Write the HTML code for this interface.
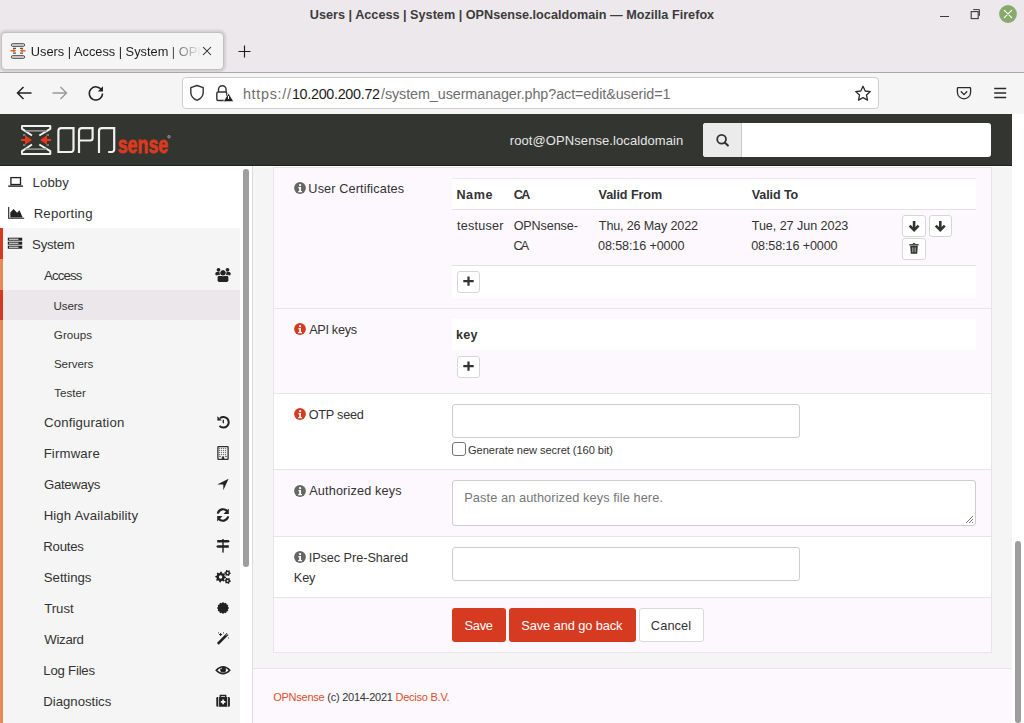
<!DOCTYPE html>
<html><head><meta charset="utf-8">
<style>
*{box-sizing:border-box;margin:0;padding:0}
html,body{width:1024px;height:723px;overflow:hidden;background:#fff}
body{position:relative;font-family:"Liberation Sans",sans-serif;color:#333}
.abs{position:absolute}
.t{position:absolute;white-space:nowrap;line-height:1}
svg{overflow:visible}
</style></head>
<body>
<div class="abs" style="left:0;top:0;width:1024px;height:73px;background:#ece8eb"></div>
<div class="t" style="left:309.84px;top:9px;font-size:12.65px;color:#3c3c3c;font-weight:700;letter-spacing:0.012px;">Users | Access | System | OPNsense.localdomain — Mozilla Firefox</div>
<div class="abs" style="left:940px;top:15.6px;width:8.5px;height:1.3px;background:#3a3a3a"></div>
<svg class="abs" style="left:968px;top:7px" width="14" height="14" viewBox="0 0 14 14"><rect x="3.2" y="4.6" width="7" height="7" fill="none" stroke="#3a3a3a" stroke-width="1.1"/><path d="M5.2 2.6h6.2v6.2" fill="none" stroke="#3a3a3a" stroke-width="1"/></svg>
<svg class="abs" style="left:998px;top:4px" width="20" height="20" viewBox="0 0 20 20"><circle cx="10" cy="10" r="8.9" fill="#89a96b"/><path d="M6.3 6.3L13.7 13.7M13.7 6.3L6.3 13.7" stroke="#fff" stroke-width="1.15" stroke-linecap="round"/></svg>
<div class="abs" style="left:2px;top:33px;width:221px;height:36px;background:#f5f5f5;border-radius:4px;box-shadow:0 0 0 1px rgba(0,0,0,.07),0 0 2px 2.5px rgba(0,0,0,.11)"></div>
<svg class="abs" style="left:8px;top:41px" width="20" height="20" viewBox="0 0 20 20">
<rect x="3.3" y="2.6" width="13.4" height="2.8" rx="1.4" fill="#d0d0d0" stroke="#5a5a5a" stroke-width="1"/>
<rect x="3.3" y="14.6" width="13.4" height="2.8" rx="1.4" fill="#d0d0d0" stroke="#5a5a5a" stroke-width="1"/>
<path d="M5 7.3h3M12 7.3h3M5 12.1h3M12 12.1h3" stroke="#333" stroke-width="1"/>
<path d="M2.5 9.7h3.5M17.5 9.7H14" stroke="#f26522" stroke-width="1.5"/><path d="M5.2 7.6l3 2.1-3 2.1zM14.8 7.6l-3 2.1 3 2.1z" fill="#f26522"/>
</svg>
<div class="t" style="left:30.8px;top:46px;font-size:12.8px;color:#1e1e1e;width:170px;overflow:hidden;-webkit-mask-image:linear-gradient(90deg,#000 135px,transparent 170px)">Users | Access | System | OPNsense.localdomain</div>
<svg class="abs" style="left:202px;top:46px" width="10" height="10" viewBox="0 0 10 10"><path d="M1 1L9 9M9 1L1 9" stroke="#222" stroke-width="1.05"/></svg>
<svg class="abs" style="left:238px;top:45px" width="13" height="13" viewBox="0 0 13 13"><path d="M6.5 0.5v12M0.5 6.5h12" stroke="#1e1e1e" stroke-width="1.15"/></svg>
<div class="abs" style="left:0;top:72px;width:1024px;height:1px;background:#aaa7aa"></div>
<div class="abs" style="left:0;top:73px;width:1024px;height:41px;background:#f5f5f5"></div>
<svg class="abs" style="left:15px;top:85px" width="18" height="16" viewBox="0 0 18 16"><path d="M16.5 8H2.5M8.5 2L2.5 8l6 6" fill="none" stroke="#222" stroke-width="1.5"/></svg>
<svg class="abs" style="left:51px;top:85px" width="18" height="16" viewBox="0 0 18 16"><path d="M1.5 8h14M9.5 2l6 6-6 6" fill="none" stroke="#999" stroke-width="1.4"/></svg>
<svg class="abs" style="left:87px;top:84px" width="18" height="18" viewBox="0 0 18 18"><path d="M14.8 6.5A6.6 6.6 0 1 0 15.5 9.5" fill="none" stroke="#222" stroke-width="1.5"/><path d="M16 2.2v5.2h-5.2z" fill="#222"/></svg>
<div class="abs" style="left:182px;top:77px;width:697px;height:32px;background:#fff;border:1px solid #cfcdcf;border-radius:4px"></div>
<svg class="abs" style="left:188px;top:84px" width="18" height="18" viewBox="0 0 18 18"><path d="M9 1.5L2.8 3.6v4.6c0 4 2.7 6.6 6.2 8.1 3.5-1.5 6.2-4.1 6.2-8.1V3.6z" fill="none" stroke="#333" stroke-width="1.4" stroke-linejoin="round"/></svg>
<svg class="abs" style="left:215px;top:84px" width="20" height="18" viewBox="0 0 20 18"><path d="M3.5 8V5.5a3.8 3.8 0 0 1 7.6 0V8" fill="none" stroke="#333" stroke-width="1.4"/><rect x="1.8" y="8" width="10" height="8.5" rx="1.5" fill="none" stroke="#333" stroke-width="1.4"/><path d="M13.5 8.5l5.5 9h-11z" fill="#f5f5f5"/><path d="M13.5 9.8l4.6 7.5H8.9z" fill="#222"/><path d="M13.5 12v3" stroke="#fff" stroke-width="1.1"/></svg>
<div class="t" style="left:242.90px;top:87px;font-size:14.35px;color:#6e6e6e;font-weight:400;letter-spacing:0.726px;">https://</div>
<div class="t" style="left:291.92px;top:87px;font-size:14.35px;color:#1b1b1b;font-weight:400;letter-spacing:-0.298px;">10.200.200.72</div>
<div class="t" style="left:381.00px;top:87px;font-size:14.35px;color:#6e6e6e;font-weight:400;letter-spacing:-0.077px;">/system_usermanager.php?act=edit&amp;userid=1</div>
<svg class="abs" style="left:853px;top:84px" width="20" height="20" viewBox="0 0 20 20"><path d="M10 2.3l2.2 4.7 5.1.6-3.8 3.5 1 5L10 13.6l-4.5 2.5 1-5-3.8-3.5 5.1-.6z" fill="none" stroke="#2a2a2a" stroke-width="1.3" stroke-linejoin="round"/></svg>
<svg class="abs" style="left:955px;top:85px" width="18" height="16" viewBox="0 0 18 16"><path d="M3.2 2.6h11.6a.8.8 0 0 1 .8.8v3.8a6.6 6.6 0 0 1-13.2 0V3.4a.8.8 0 0 1 .8-.8z" fill="none" stroke="#2a2a2a" stroke-width="1.3"/><path d="M6.2 6.8L9 9.6l2.8-2.8" fill="none" stroke="#2a2a2a" stroke-width="1.3" stroke-linecap="round" stroke-linejoin="round"/></svg>
<svg class="abs" style="left:992px;top:86px" width="16" height="14" viewBox="0 0 16 14"><path d="M2.2 2.5h12M2.2 7h12M2.2 11.5h12" stroke="#2a2a2a" stroke-width="1.3"/></svg>
<div class="abs" style="left:0;top:114px;width:1012px;height:52px;background:#333531"></div>
<div class="abs" style="left:1012px;top:114px;width:12px;height:609px;background:#fff"></div>
<div class="abs" style="left:0;top:165px;width:1012px;height:1px;background:#20211f"></div>
<svg class="abs" style="left:18px;top:122px" width="36" height="36" viewBox="0 0 36 36">
<path d="M14 13.5L4 6.8V4h28.3v2.8L21.3 13.5M14 22.5L4 29.2V32h28.3v-2.8L21.3 22.5" fill="none" stroke="#f2f2f2" stroke-width="2" stroke-linejoin="round"/>
<path d="M7.5 8.8h21M7.5 27.2h21" stroke="#8c8c8c" stroke-width="1.8"/>
<path d="M5 13h2.5M5 23h2.5M28.5 13H31M28.5 23H31" stroke="#8c8c8c" stroke-width="1.6"/>
<path d="M3 18h6M33 18h-6" stroke="#e5381c" stroke-width="2.2"/>
<path d="M7 13.2L14 18 7 22.8zM29 13.2L22 18l7 4.8z" fill="#e5381c"/>
</svg>
<svg class="abs" style="left:54px;top:122px" width="70" height="36" viewBox="0 0 70 36">
<path d="M7.2 6.2H19.5V27.6a2.4 2.4 0 0 1-2.4 2.4H4.4V9A2.8 2.8 0 0 1 7.2 6.2z" fill="none" stroke="#f0f0f0" stroke-width="2.2"/>
<path d="M25 31.1V9a2.8 2.8 0 0 1 2.8-2.8H38.6V16.1a2.4 2.4 0 0 1-2.4 2.4H25" fill="none" stroke="#f0f0f0" stroke-width="2.2"/>
<path d="M45 31.1V9a2.8 2.8 0 0 1 2.8-2.8H60.2V27.6a2.4 2.4 0 0 1-2.4 2.4H54.2" fill="none" stroke="#f0f0f0" stroke-width="2.2"/>
</svg>
<svg class="abs" style="left:116px;top:130px" width="58" height="26" viewBox="0 0 58 26"><text x="1.7" y="22.5" font-family="Liberation Sans" font-weight="700" font-size="23" fill="#da3a1e" stroke="#da3a1e" stroke-width="0.8" textLength="50.6" lengthAdjust="spacingAndGlyphs">sense</text><circle cx="53" cy="6.8" r="1.7" fill="#8c8c8c"/><circle cx="53" cy="6.8" r="0.7" fill="#5a5a5a"/></svg>
<div class="t" style="left:509.85px;top:134px;font-size:13.0px;color:#e6e6e6;font-weight:400;letter-spacing:0.079px;">root@OPNsense.localdomain</div>
<div class="abs" style="left:703px;top:123px;width:288px;height:34px;background:#fff;border-radius:3px;overflow:hidden"><div style="position:absolute;left:0;top:0;width:39px;height:34px;background:#ebebeb;border-right:1px solid #c8c8c8"></div></div>
<svg class="abs" style="left:715px;top:132px" width="16" height="16" viewBox="0 0 16 16"><circle cx="6.6" cy="7.3" r="4.4" fill="none" stroke="#333" stroke-width="1.8"/><path d="M9.7 10.4l3.2 3.2" stroke="#333" stroke-width="2.1" stroke-linecap="round"/></svg>
<div class="abs" style="left:0;top:166px;width:252px;height:557px;background:#fff"></div>
<div class="abs" style="left:0;top:228px;width:240px;height:495px;background:#f5f5f5"></div>
<div class="abs" style="left:0;top:290px;width:240px;height:30px;background:#ebe7ea"></div>
<div class="abs" style="left:0;top:259px;width:3px;height:464px;background:#e98a52"></div>
<div class="abs" style="left:0;top:228px;width:3px;height:31px;background:#d63a1e"></div>
<div class="abs" style="left:0;top:290px;width:3px;height:30px;background:#d63a1e"></div>
<div class="abs" style="left:243px;top:169px;width:6px;height:398px;background:#9e9e9e;border-radius:3px"></div>
<div class="abs" style="left:252px;top:166px;width:1px;height:557px;background:#dddddd"></div>
<div class="t" style="left:32.54px;top:176px;font-size:13.2px;color:#333;font-weight:400;letter-spacing:0.096px;">Lobby</div>
<div class="t" style="left:33.64px;top:207px;font-size:13.2px;color:#333;font-weight:400;letter-spacing:0.212px;">Reporting</div>
<div class="t" style="left:32.11px;top:238px;font-size:13.2px;color:#333;font-weight:400;letter-spacing:-0.274px;">System</div>
<div class="t" style="left:44.00px;top:269px;font-size:13.2px;color:#333;font-weight:400;letter-spacing:-0.842px;">Access</div>
<div class="t" style="left:53.53px;top:300px;font-size:11.6px;color:#333;font-weight:400;letter-spacing:-0.100px;">Users</div>
<div class="t" style="left:53.82px;top:329px;font-size:11.6px;color:#333;font-weight:400;letter-spacing:0.068px;">Groups</div>
<div class="t" style="left:53.88px;top:358px;font-size:11.6px;color:#333;font-weight:400;letter-spacing:-0.072px;">Servers</div>
<div class="t" style="left:54.17px;top:387px;font-size:11.6px;color:#333;font-weight:400;letter-spacing:0.031px;">Tester</div>
<div class="t" style="left:44.04px;top:416px;font-size:13.2px;color:#333;font-weight:400;letter-spacing:0.145px;">Configuration</div>
<div class="t" style="left:43.64px;top:447px;font-size:13.2px;color:#333;font-weight:400;letter-spacing:0.167px;">Firmware</div>
<div class="t" style="left:44.04px;top:478px;font-size:13.2px;color:#333;font-weight:400;letter-spacing:-0.322px;">Gateways</div>
<div class="t" style="left:43.64px;top:509px;font-size:13.2px;color:#333;font-weight:400;letter-spacing:0.141px;">High Availability</div>
<div class="t" style="left:43.34px;top:540px;font-size:13.2px;color:#333;font-weight:400;letter-spacing:-0.245px;">Routes</div>
<div class="t" style="left:43.81px;top:571px;font-size:13.2px;color:#333;font-weight:400;letter-spacing:-0.009px;">Settings</div>
<div class="t" style="left:44.14px;top:602px;font-size:13.2px;color:#333;font-weight:400;letter-spacing:-0.009px;">Trust</div>
<div class="t" style="left:44.33px;top:633px;font-size:13.2px;color:#333;font-weight:400;letter-spacing:-0.306px;">Wizard</div>
<div class="t" style="left:43.34px;top:664px;font-size:13.2px;color:#333;font-weight:400;letter-spacing:-0.222px;">Log Files</div>
<div class="t" style="left:43.34px;top:695px;font-size:13.2px;color:#333;font-weight:400;letter-spacing:-0.023px;">Diagnostics</div>
<svg class="abs" style="left:4px;top:170px" width="24" height="22" viewBox="0 0 24 22"><rect x="6.9" y="7.6" width="9.6" height="6.9" fill="none" stroke="#222" stroke-width="1.3"/><rect x="4.2" y="15.4" width="14.8" height="1.4" fill="#222"/></svg>
<svg class="abs" style="left:4px;top:200px" width="24" height="22" viewBox="0 0 24 22"><path d="M4.7 7v11.2h15.5" fill="none" stroke="#222" stroke-width="1.1"/><path d="M6.3 17.4V12.5l3.3-3.6 3.5 3.8 2.4-2.5 3.2 7.2z" fill="#222"/></svg>
<svg class="abs" style="left:4px;top:230px" width="24" height="22" viewBox="0 0 24 22"><g fill="#222"><rect x="3.8" y="7.7" width="14.4" height="3"/><rect x="3.8" y="11.7" width="14.4" height="3"/><rect x="3.8" y="15.7" width="14.4" height="3"/></g><g stroke="#fff" stroke-width="1"><path d="M5 9.2h9.5M5 13.2h9.5M5 17.2h9.5"/></g></svg>
<svg class="abs" style="left:212px;top:265px" width="22" height="22" viewBox="0 0 22 22"><g fill="#222"><circle cx="6.5" cy="4.8" r="1.9"/><circle cx="15.5" cy="4.8" r="1.9"/><circle cx="11" cy="7.8" r="2.6"/><rect x="3.3" y="7" width="5.3" height="3.6" rx="1.5"/><rect x="13.4" y="7" width="5.3" height="3.6" rx="1.5"/><rect x="5.6" y="10.8" width="10.8" height="6.2" rx="1.7"/></g><g stroke="#f5f5f5" stroke-width="0.9" fill="none"><circle cx="11" cy="7.8" r="3.1"/><path d="M5.1 10.4h11.8"/></g><circle cx="11" cy="7.8" r="2.6" fill="#222"/></svg>
<svg class="abs" style="left:212px;top:410px" width="22" height="22" viewBox="0 0 22 22"><path d="M8 8.2A5.3 5.3 0 1 1 7.5 15.8" fill="none" stroke="#222" stroke-width="2"/><path d="M5.4 6.2v4.4h4.4z" fill="#222"/><path d="M11.3 9.8v3.4" stroke="#222" stroke-width="1.3"/></svg>
<svg class="abs" style="left:212px;top:442px" width="22" height="22" viewBox="0 0 22 22"><rect x="5.9" y="4.7" width="10.2" height="12.6" rx="0.6" fill="none" stroke="#2e2e2e" stroke-width="1.3"/><g stroke="#2e2e2e" stroke-width="0.9" stroke-dasharray="0.9 1.1"><path d="M7.2 6.6h7.8M7.2 8.6h7.8M7.2 10.6h7.8M7.2 12.6h7.8"/></g><path d="M7.2 14.4h1.6M13.2 14.4h1.6" stroke="#2e2e2e" stroke-width="0.9"/><path d="M9.8 17v-1.6a1.2 1.2 0 0 1 2.4 0V17z" fill="#2e2e2e"/></svg>
<svg class="abs" style="left:212px;top:473px" width="22" height="22" viewBox="0 0 22 22"><path d="M5.2 11.4L16.6 5.8 11.3 17.2V11.4z" fill="#222"/></svg>
<svg class="abs" style="left:212px;top:504px" width="22" height="22" viewBox="0 0 22 22"><path d="M5.8 9.6A5.4 5.4 0 0 1 15.3 7.3" fill="none" stroke="#222" stroke-width="2.2"/><path d="M16.8 4.6v5.3h-5.3z" fill="#222"/><path d="M16.2 12.4A5.4 5.4 0 0 1 6.7 14.7" fill="none" stroke="#222" stroke-width="2.2"/><path d="M5.2 17.4v-5.3h5.3z" fill="#222"/></svg>
<svg class="abs" style="left:212px;top:535px" width="22" height="22" viewBox="0 0 22 22"><rect x="10.3" y="4" width="1.4" height="13.6" fill="#222"/><path d="M5.2 5h11.3l1.3 1.3-1.3 1.3H5.2zM16.8 10.2H5.5l-1.3 1.3 1.3 1.3h11.3z" fill="#222"/></svg>
<svg class="abs" style="left:212px;top:566px" width="22" height="22" viewBox="0 0 22 22"><path d="M14.00,11.00 L13.90,12.05 L12.39,12.57 L12.01,13.28 L12.42,14.82 L11.60,15.49 L10.17,14.79 L9.40,15.02 L8.60,16.40 L7.55,16.30 L7.03,14.79 L6.32,14.41 L4.78,14.82 L4.11,14.00 L4.81,12.57 L4.58,11.80 L3.20,11.00 L3.30,9.95 L4.81,9.43 L5.19,8.72 L4.78,7.18 L5.60,6.51 L7.03,7.21 L7.80,6.98 L8.60,5.60 L9.65,5.70 L10.17,7.21 L10.88,7.59 L12.42,7.18 L13.09,8.00 L12.39,9.43 L12.62,10.20z M10.299999999999999,11 a1.7,1.7 0 1 0 -3.4,0 a1.7,1.7 0 1 0 3.4,0z" fill="#222" fill-rule="evenodd"/><path d="M18.80,7.00 L18.69,7.83 L17.68,8.20 L17.30,8.70 L17.20,9.77 L16.43,10.09 L15.60,9.40 L14.98,9.32 L14.00,9.77 L13.34,9.26 L13.52,8.20 L13.28,7.62 L12.40,7.00 L12.51,6.17 L13.52,5.80 L13.90,5.30 L14.00,4.23 L14.77,3.91 L15.60,4.60 L16.22,4.68 L17.20,4.23 L17.86,4.74 L17.68,5.80 L17.92,6.38z M16.5,7 a0.9,0.9 0 1 0 -1.8,0 a0.9,0.9 0 1 0 1.8,0z" fill="#222" fill-rule="evenodd"/><path d="M18.80,14.80 L18.69,15.63 L17.68,16.00 L17.30,16.50 L17.20,17.57 L16.43,17.89 L15.60,17.20 L14.98,17.12 L14.00,17.57 L13.34,17.06 L13.52,16.00 L13.28,15.42 L12.40,14.80 L12.51,13.97 L13.52,13.60 L13.90,13.10 L14.00,12.03 L14.77,11.71 L15.60,12.40 L16.22,12.48 L17.20,12.03 L17.86,12.54 L17.68,13.60 L17.92,14.18z M16.5,14.8 a0.9,0.9 0 1 0 -1.8,0 a0.9,0.9 0 1 0 1.8,0z" fill="#222" fill-rule="evenodd"/></svg>
<svg class="abs" style="left:212px;top:597px" width="22" height="22" viewBox="0 0 22 22"><path d="M17.10,11.00 L15.83,12.29 L16.28,14.05 L14.54,14.54 L14.05,16.28 L12.29,15.83 L11.00,17.10 L9.71,15.83 L7.95,16.28 L7.46,14.54 L5.72,14.05 L6.17,12.29 L4.90,11.00 L6.17,9.71 L5.72,7.95 L7.46,7.46 L7.95,5.72 L9.71,6.17 L11.00,4.90 L12.29,6.17 L14.05,5.72 L14.54,7.46 L16.28,7.95 L15.83,9.71z" fill="#222"/></svg>
<svg class="abs" style="left:212px;top:628px" width="22" height="22" viewBox="0 0 22 22"><path d="M5.8 15.8L15.6 6" stroke="#222" stroke-width="2.6"/><path d="M14 7.5l1.5-1.5" stroke="#fff" stroke-width="1"/><path d="M8.6 5v3M7.1 6.5h3" stroke="#222" stroke-width="1"/><g fill="#888"><rect x="6" y="4" width="1" height="1.6"/><rect x="11" y="4" width="1" height="1.6"/><rect x="16" y="9.2" width="1" height="1.6"/></g></svg>
<svg class="abs" style="left:212px;top:659px" width="22" height="22" viewBox="0 0 22 22"><path d="M4.2 11.2Q11 4.2 17.8 11.2Q11 18.2 4.2 11.2z" fill="none" stroke="#222" stroke-width="1.5"/><circle cx="11.1" cy="10.7" r="2.9" fill="#222"/><path d="M10 8.8a1.5 1.5 0 0 0-1 1.3" stroke="#fff" stroke-width=".8" fill="none"/></svg>
<svg class="abs" style="left:212px;top:690px" width="22" height="22" viewBox="0 0 22 22"><path d="M8.3 7V5.5h5.4V7" fill="none" stroke="#222" stroke-width="1.3"/><rect x="4.3" y="7" width="13.6" height="9.8" rx="1.3" fill="#222"/><path d="M6.6 7v9.8M15.6 7v9.8" stroke="#f5f5f5" stroke-width="0.8"/><path d="M11.1 9.6v4.6M8.8 11.9h4.6" stroke="#fff" stroke-width="1.6"/></svg>
<div class="abs" style="left:253px;top:166px;width:759px;height:557px;background:#f5f5f5"></div>
<div class="abs" style="left:253px;top:166px;width:759px;height:1px;background:#fff"></div>
<div class="abs" style="left:273px;top:167px;width:719px;height:486px;border:1px solid #e6e6e6;background:#fff"></div>
<div class="abs" style="left:274px;top:168px;width:717px;height:140px;background:#fdf8fd"></div>
<div class="abs" style="left:274px;top:309px;width:717px;height:84px;background:#fdf8fd"></div>
<div class="abs" style="left:274px;top:394px;width:717px;height:75px;background:#fff"></div>
<div class="abs" style="left:274px;top:470px;width:717px;height:66px;background:#fdf8fd"></div>
<div class="abs" style="left:274px;top:537px;width:717px;height:60px;background:#fff"></div>
<div class="abs" style="left:274px;top:598px;width:717px;height:54px;background:#fdf8fd"></div>
<div class="abs" style="left:274px;top:308px;width:717px;height:1px;background:#e6e6e6"></div>
<div class="abs" style="left:274px;top:393px;width:717px;height:1px;background:#e6e6e6"></div>
<div class="abs" style="left:274px;top:469px;width:717px;height:1px;background:#e6e6e6"></div>
<div class="abs" style="left:274px;top:536px;width:717px;height:1px;background:#e6e6e6"></div>
<div class="abs" style="left:274px;top:597px;width:717px;height:1px;background:#e6e6e6"></div>
<div class="abs" style="left:253px;top:668px;width:759px;height:1px;background:#e8e6e8"></div>
<div class="abs" style="left:253px;top:669px;width:759px;height:54px;background:#fdf8fd"></div>
<div class="abs" style="left:1014.7px;top:541px;width:6.3px;height:182px;background:#9d9d9d;border-radius:3.2px"></div>
<svg class="abs" style="left:294px;top:182px" width="12" height="12" viewBox="0 0 12 12"><circle cx="6" cy="6" r="5.9" fill="#666"/><circle cx="6.1" cy="3.2" r="1.1" fill="#fff"/><path d="M4.4 5.1h2.6v3.9h1v1.2H4.2V9h1V6.3h-.8z" fill="#fff"/></svg>
<div class="t" style="left:308.35px;top:183px;font-size:12.7px;color:#333;font-weight:400;letter-spacing:0.121px;">User Certificates</div>
<svg class="abs" style="left:294px;top:323px" width="12" height="12" viewBox="0 0 12 12"><circle cx="6" cy="6" r="5.9" fill="#d63a1e"/><circle cx="6.1" cy="3.2" r="1.1" fill="#fff"/><path d="M4.4 5.1h2.6v3.9h1v1.2H4.2V9h1V6.3h-.8z" fill="#fff"/></svg>
<div class="t" style="left:309.20px;top:324px;font-size:12.7px;color:#333;font-weight:400;letter-spacing:-0.322px;">API keys</div>
<svg class="abs" style="left:294px;top:408.4px" width="12" height="12" viewBox="0 0 12 12"><circle cx="6" cy="6" r="5.9" fill="#d63a1e"/><circle cx="6.1" cy="3.2" r="1.1" fill="#fff"/><path d="M4.4 5.1h2.6v3.9h1v1.2H4.2V9h1V6.3h-.8z" fill="#fff"/></svg>
<div class="t" style="left:308.63px;top:409px;font-size:12.7px;color:#333;font-weight:400;letter-spacing:-0.237px;">OTP seed</div>
<svg class="abs" style="left:294px;top:484.5px" width="12" height="12" viewBox="0 0 12 12"><circle cx="6" cy="6" r="5.9" fill="#666"/><circle cx="6.1" cy="3.2" r="1.1" fill="#fff"/><path d="M4.4 5.1h2.6v3.9h1v1.2H4.2V9h1V6.3h-.8z" fill="#fff"/></svg>
<div class="t" style="left:309.20px;top:485px;font-size:12.7px;color:#333;font-weight:400;letter-spacing:0.149px;">Authorized keys</div>
<svg class="abs" style="left:294px;top:551.2px" width="12" height="12" viewBox="0 0 12 12"><circle cx="6" cy="6" r="5.9" fill="#666"/><circle cx="6.1" cy="3.2" r="1.1" fill="#fff"/><path d="M4.4 5.1h2.6v3.9h1v1.2H4.2V9h1V6.3h-.8z" fill="#fff"/></svg>
<div class="t" style="left:308.66px;top:552px;font-size:12.7px;color:#333;font-weight:400;letter-spacing:-0.049px;">IPsec Pre-Shared</div>
<div class="t" style="left:293.78px;top:572px;font-size:12.7px;color:#333;font-weight:400;letter-spacing:-0.096px;">Key</div>
<div class="abs" style="left:452px;top:178px;width:524px;height:120px;background:#fff"></div>
<div class="abs" style="left:452px;top:178px;width:524px;height:1px;background:#ececec"></div>
<div class="abs" style="left:452px;top:209px;width:524px;height:1px;background:#e2e2e2"></div>
<div class="abs" style="left:452px;top:210px;width:524px;height:55px;background:#fdf8fd"></div>
<div class="abs" style="left:452px;top:265px;width:524px;height:1px;background:#e2e2e2"></div>
<div class="t" style="left:456.48px;top:189px;font-size:12.6px;color:#333;font-weight:700;letter-spacing:0.542px;">Name</div>
<div class="t" style="left:513.70px;top:189px;font-size:12.6px;color:#333;font-weight:700;letter-spacing:-1.525px;">CA</div>
<div class="t" style="left:598.54px;top:189px;font-size:12.6px;color:#333;font-weight:700;letter-spacing:-0.092px;">Valid From</div>
<div class="t" style="left:751.64px;top:189px;font-size:12.6px;color:#333;font-weight:700;letter-spacing:-0.101px;">Valid To</div>
<div class="t" style="left:457.11px;top:220px;font-size:12.6px;color:#333;font-weight:400;letter-spacing:0.212px;">testuser</div>
<div class="t" style="left:513.63px;top:220px;font-size:12.6px;color:#333;font-weight:400;letter-spacing:-0.101px;">OPNsense-</div>
<div class="t" style="left:513.57px;top:240px;font-size:12.6px;color:#333;font-weight:400;letter-spacing:-1.821px;">CA</div>
<div class="t" style="left:598.85px;top:220px;font-size:12.6px;color:#333;font-weight:400;letter-spacing:-0.158px;">Thu, 26 May 2022</div>
<div class="t" style="left:598.10px;top:240px;font-size:12.6px;color:#333;font-weight:400;letter-spacing:-0.123px;">08:58:16 +0000</div>
<div class="t" style="left:751.75px;top:220px;font-size:12.6px;color:#333;font-weight:400;letter-spacing:-0.062px;">Tue, 27 Jun 2023</div>
<div class="t" style="left:751.20px;top:240px;font-size:12.6px;color:#333;font-weight:400;letter-spacing:-0.116px;">08:58:16 +0000</div>
<div class="abs" style="left:902px;top:215px;width:24px;height:22px;background:#fff;border:1px solid #d6d6d6;border-radius:3px"></div><svg class="abs" style="left:902px;top:215px" width="24" height="22" viewBox="0 0 24 22"><path d="M12.1 6v8.5M7.6 10.6l4.5 4.5 4.5-4.5" fill="none" stroke="#333" stroke-width="2.6" stroke-linejoin="miter"/></svg>
<div class="abs" style="left:929px;top:215px;width:23px;height:22px;background:#fff;border:1px solid #d6d6d6;border-radius:3px"></div><svg class="abs" style="left:929px;top:215px" width="23" height="22" viewBox="0 0 23 22"><path d="M11.3 6v8.5M6.8 10.6l4.5 4.5 4.5-4.5" fill="none" stroke="#333" stroke-width="2.6" stroke-linejoin="miter"/></svg>
<div class="abs" style="left:902px;top:238px;width:24px;height:22px;background:#fff;border:1px solid #d6d6d6;border-radius:3px"></div><svg class="abs" style="left:902px;top:238px" width="24" height="22" viewBox="0 0 24 22"><path d="M7.3 6.8h9.4" stroke="#333" stroke-width="1.3"/><path d="M10.3 6.5a1.8 1.5 0 0 1 3.4 0" fill="none" stroke="#333" stroke-width="1"/><path d="M8.2 7.8h7.6l-.6 7.9H8.8z" fill="#333"/><path d="M10.5 9.3v5M12 9.3v5M13.5 9.3v5" stroke="#c9d3d3" stroke-width=".55"/></svg>
<div class="abs" style="left:457px;top:271px;width:23px;height:22px;background:#fff;border:1px solid #d6d6d6;border-radius:3px"></div><svg class="abs" style="left:457px;top:271px" width="23" height="22" viewBox="0 0 23 22"><path d="M11.5 5.4v9.4M6.3 10.1h10.4" stroke="#333" stroke-width="2.2"/></svg>
<div class="abs" style="left:452px;top:319px;width:524px;height:31px;background:#fff"></div>
<div class="t" style="left:455.92px;top:329px;font-size:12.6px;color:#333;font-weight:700;letter-spacing:0.233px;">key</div>
<div class="abs" style="left:457px;top:356px;width:23px;height:22px;background:#fff;border:1px solid #d6d6d6;border-radius:3px"></div><svg class="abs" style="left:457px;top:356px" width="23" height="22" viewBox="0 0 23 22"><path d="M11.5 5.4v9.4M6.3 10.1h10.4" stroke="#333" stroke-width="2.2"/></svg>
<div class="abs" style="left:452px;top:404px;width:348px;height:34px;background:#fff;border:1px solid #cdcdcd;border-radius:3px"></div>
<div class="abs" style="left:452px;top:442px;width:14px;height:14px;background:#fff;border:1.7px solid #72747d;border-radius:3px"></div>
<div class="t" style="left:468.05px;top:445px;font-size:11.1px;color:#333;font-weight:400;letter-spacing:-0.063px;">Generate new secret (160 bit)</div>
<div class="abs" style="left:452px;top:480px;width:524px;height:46px;background:#fff;border:1px solid #cdcdcd;border-radius:3px"></div>
<div class="t" style="left:464.28px;top:492px;font-size:12.8px;color:#777;font-weight:400;letter-spacing:0.068px;">Paste an authorized keys file here.</div>
<svg class="abs" style="left:963px;top:513px" width="11" height="11" viewBox="0 0 11 11"><path d="M10 3L3 10M10 6L6 10M10 9L9 10" stroke="#777" stroke-width="1"/></svg>
<div class="abs" style="left:452px;top:547px;width:348px;height:34px;background:#fff;border:1px solid #cdcdcd;border-radius:3px"></div>
<div class="abs" style="left:452px;top:608px;width:54px;height:34px;background:#d63a20;border-radius:3px"></div>
<div class="abs" style="left:509px;top:608px;width:127px;height:34px;background:#d63a20;border-radius:3px"></div>
<div class="abs" style="left:639px;top:608px;width:65px;height:34px;background:#fff;border:1px solid #dadada;border-radius:3px"></div>
<div class="t" style="left:464.62px;top:620px;font-size:12.8px;color:#fff;font-weight:400;letter-spacing:-0.277px;">Save</div>
<div class="t" style="left:521.32px;top:620px;font-size:12.8px;color:#fff;font-weight:400;letter-spacing:-0.086px;">Save and go back</div>
<div class="t" style="left:650.86px;top:620px;font-size:12.8px;color:#333;font-weight:400;letter-spacing:0.093px;">Cancel</div>
<div class="t" style="left:273.20px;top:692px;font-size:11px;color:#333;font-weight:400;letter-spacing:-0.24px"><span style="color:#d94f2a">OPNsense</span> (c) 2014-2021 <span style="color:#d94f2a">Deciso B.V.</span></div>
</body></html>
